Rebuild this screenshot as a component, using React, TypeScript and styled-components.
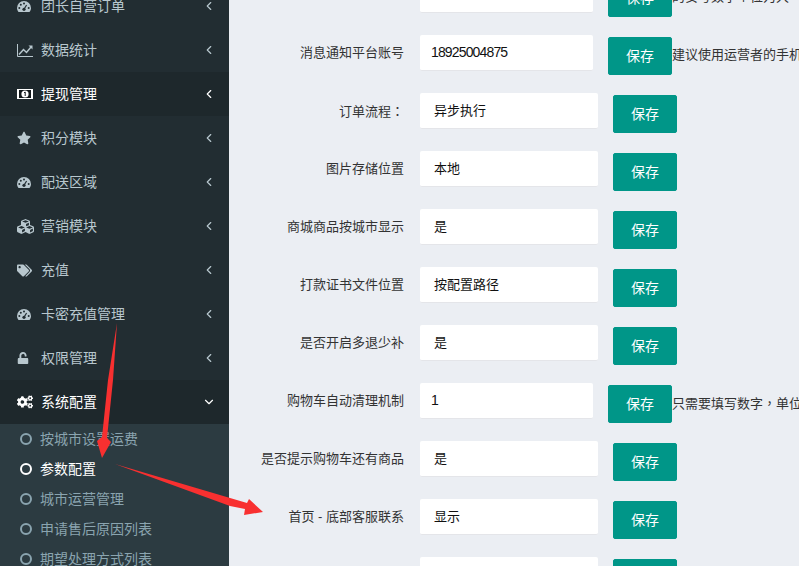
import React from "react";
import styled, { createGlobalStyle } from "styled-components";
import { IconType } from "react-icons";
import { FaCogs, FaCubes, FaStar, FaTags, FaUnlock } from "react-icons/fa";
import { ChevronDown, ChevronLeft } from "lucide-react";

const GlobalStyle = createGlobalStyle`
  html, body {
    margin: 0;
    padding: 0;
    height: 100%;
    overflow: hidden;
    background: #ebeef3;
  }
  body {
    font-family: "Liberation Sans", "Noto Sans CJK SC", sans-serif;
    font-size: 13px;
  }
`;

const Page = styled.div`
  position: relative;
  width: 799px;
  height: 566px;
  display: flex;
  overflow: hidden;
`;

const Sidebar = styled.aside`
  flex: 0 0 229px;
  height: 566px;
  overflow: hidden;
  background: #222d32;
`;

const MenuList = styled.ul`
  list-style: none;
  margin: -16px 0 0;
  padding: 0;
`;

const MenuItem = styled.li<{ $active?: boolean }>`
  height: 44px;
  display: flex;
  align-items: center;
  padding: 0 13px 0 17px;
  font-size: 14px;
  color: ${(p) => (p.$active ? "#fff" : "#b8c7ce")};
  background: ${(p) => (p.$active ? "#1e282c" : "transparent")};
`;

const MenuIcon = styled.span`
  flex: 0 0 24px;
  display: flex;
  align-items: center;
  font-size: 15px;
`;

const MenuLabel = styled.span`
  flex: 1;
  padding-bottom: 2px;
`;

const Caret = styled.span`
  display: flex;
  align-items: center;
`;

const SubList = styled.ul`
  list-style: none;
  margin: 0;
  padding: 0;
  background: #2c3b41;
`;

const SubItem = styled.li<{ $active?: boolean }>`
  height: 30px;
  display: flex;
  align-items: center;
  gap: 8px;
  padding-left: 20px;
  font-size: 14px;
  color: ${(p) => (p.$active ? "#fff" : "#8aa4af")};
`;

const SubDot = styled.i`
  box-sizing: border-box;
  width: 12px;
  height: 12px;
  border: 2px solid currentColor;
  border-radius: 50%;
`;

const SubLabel = styled.span`
  padding-bottom: 2px;
`;

const Main = styled.main`
  flex: 1;
  min-width: 0;
  overflow: hidden;
  margin-top: -23px;
`;

const Row = styled.div`
  height: 58px;
  display: flex;
  align-items: flex-start;
`;

const Label = styled.label`
  flex: 0 0 175px;
  height: 36px;
  line-height: 36px;
  text-align: right;
  color: #333;
  white-space: nowrap;
`;

const Field = styled.div<{ $narrow?: boolean }>`
  flex: 0 0 ${(p) => (p.$narrow ? "173px" : "178px")};
  box-sizing: border-box;
  margin-left: 16px;
  height: 36px;
  line-height: 35px;
  padding-left: ${(p) => (p.$narrow ? "11px" : "14px")};
  background: #fff;
  border-bottom: 1px solid #e4e5e9;
  border-radius: 2px;
  color: #111;
  font-size: ${(p) => (p.$narrow ? "14px" : "13px")};
  letter-spacing: ${(p) => (p.$narrow ? "-0.85px" : "0")};
`;

const SaveButton = styled.button`
  flex: 0 0 64px;
  height: 38px;
  margin: 2px 0 0 15px;
  padding: 0 0 2px;
  border: 1px solid #009688;
  border-radius: 2px;
  background: #009688;
  color: #fff;
  font: inherit;
  font-size: 14px;
`;

const Hint = styled.span`
  line-height: 36px;
  margin-top: 2px;
  color: #333;
  white-space: nowrap;
`;

const Punct = styled.span`
  font-family: "Noto Sans CJK TC", sans-serif;
`;

const Arrows = styled.svg`
  position: absolute;
  left: 0;
  top: 0;
  pointer-events: none;
`;

const GaugeIcon: IconType = () => (
  <svg width="14" height="11" viewBox="0 0 14 11">
    <path d="M1.5 11C.5 9.8 0 8.5 0 7a7 7 0 0 1 14 0c0 1.5-.5 2.8-1.5 4z" fill="currentColor" />
    <g fill="#222d32">
      <circle cx="2.3" cy="7" r="1" />
      <circle cx="3.8" cy="3.8" r="1" />
      <circle cx="7" cy="2.4" r="1" />
      <circle cx="11.7" cy="7" r="1" />
      <circle cx="7" cy="8.3" r="1.6" />
    </g>
    <path d="M7 8.3 9.6 4" stroke="#222d32" strokeWidth="1.2" />
  </svg>
);

const LineChartIcon: IconType = () => (
  <svg width="16" height="13" viewBox="0 0 16 13" fill="none" stroke="currentColor">
    <path d="M.5 0v12.5H16" />
    <path d="M2 10.5l4.5-5 3 3L14 3" strokeWidth="1.5" />
    <path d="M11.5 1.5H15.5V5.5z" fill="currentColor" stroke="none" />
  </svg>
);

const MoneyIcon: IconType = () => (
  <svg width="16" height="10" viewBox="0 0 16 10">
    <rect width="16" height="10" fill="currentColor" />
    <rect x="2" y="1" width="12" height="8" fill="#12181b" />
    <circle cx="8" cy="5" r="3.6" fill="currentColor" />
    <path d="M7 3.8 8.2 3V7" fill="none" stroke="#12181b" />
  </svg>
);

const StarIcon: IconType = () => <FaStar size={14} />;
const CubesIcon: IconType = () => <FaCubes size={17} />;
const TagsIcon: IconType = () => <FaTags size={15} />;
const UnlockIcon: IconType = () => <FaUnlock size={12} />;
const CogsIcon: IconType = () => <FaCogs size={16} />;

type MenuEntry = { label: string; icon: IconType; active?: boolean; open?: boolean };

const menu: MenuEntry[] = [
  { label: "团长自营订单", icon: GaugeIcon },
  { label: "数据统计", icon: LineChartIcon },
  { label: "提现管理", icon: MoneyIcon, active: true },
  { label: "积分模块", icon: StarIcon },
  { label: "配送区域", icon: GaugeIcon },
  { label: "营销模块", icon: CubesIcon },
  { label: "充值", icon: TagsIcon },
  { label: "卡密充值管理", icon: GaugeIcon },
  { label: "权限管理", icon: UnlockIcon },
  { label: "系统配置", icon: CogsIcon, active: true, open: true },
];

const subMenu = [
  { label: "按城市设置运费" },
  { label: "参数配置", active: true },
  { label: "城市运营管理" },
  { label: "申请售后原因列表" },
  { label: "期望处理方式列表" },
];

type RowEntry = { label: React.ReactNode; value: string; narrow?: boolean; hint?: React.ReactNode };

const rows: RowEntry[] = [
  { label: "", value: "", narrow: true, hint: "的安号数字个位为大" },
  { label: "消息通知平台账号", value: "18925004875", narrow: true, hint: "建议使用运营者的手机" },
  { label: <>订单流程<Punct>：</Punct></>, value: "异步执行" },
  { label: "图片存储位置", value: "本地" },
  { label: "商城商品按城市显示", value: "是" },
  { label: "打款证书文件位置", value: "按配置路径" },
  { label: "是否开启多退少补", value: "是" },
  { label: "购物车自动清理机制", value: "1", narrow: true, hint: <>只需要填写数字<Punct>，</Punct>单位</> },
  { label: "是否提示购物车还有商品", value: "是" },
  { label: "首页 - 底部客服联系", value: "显示" },
  { label: "", value: "" },
];

export default function App() {
  return (
    <Page>
      <GlobalStyle />
      <Sidebar>
        <MenuList>
          {menu.map((m) => (
            <MenuItem key={m.label} $active={m.active}>
              <MenuIcon>
                <m.icon />
              </MenuIcon>
              <MenuLabel>{m.label}</MenuLabel>
              <Caret>{m.open ? <ChevronDown size={14} /> : <ChevronLeft size={14} />}</Caret>
            </MenuItem>
          ))}
        </MenuList>
        <SubList>
          {subMenu.map((s) => (
            <SubItem key={s.label} $active={s.active}>
              <SubDot />
              <SubLabel>{s.label}</SubLabel>
            </SubItem>
          ))}
        </SubList>
      </Sidebar>
      <Main>
        {rows.map((r, i) => (
          <Row key={i}>
            <Label>{r.label}</Label>
            <Field $narrow={r.narrow}>{r.value}</Field>
            <SaveButton>保存</SaveButton>
            {r.hint && <Hint>{r.hint}</Hint>}
          </Row>
        ))}
      </Main>
      <Arrows width="799" height="566" viewBox="0 0 799 566">
        <polygon points="117,323 113,380 107,438 111,442 102,458 97,441 102,437 108,380" fill="#f83030" />
        <polygon points="115,464 247,503 249,499 263,512 244,515 245,509 230,506" fill="#f83030" />
      </Arrows>
    </Page>
  );
}
